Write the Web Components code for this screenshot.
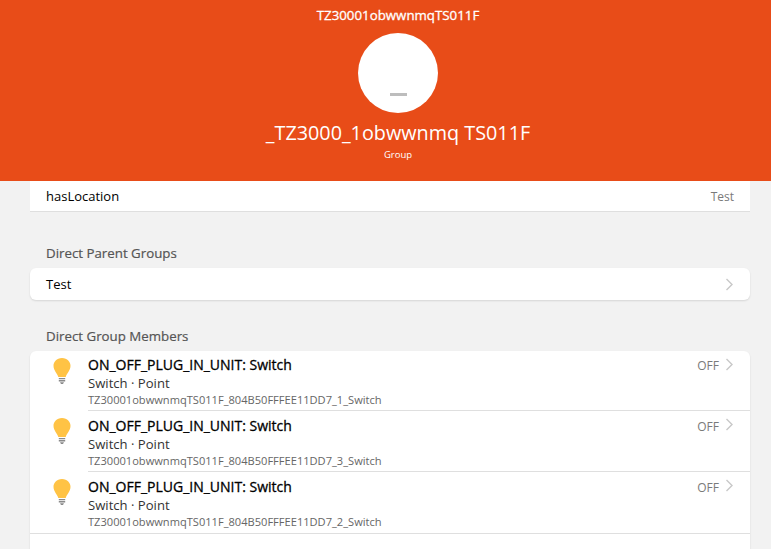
<!doctype html>
<html>
<head>
<meta charset="utf-8">
<title>Group</title>
<style>
    html, body { margin: 0; height: 549px; overflow: hidden; background: #f2f2f2; }
    body { font-family: "Open Sans", "Noto Sans", sans-serif; color: #000; }
    main { display: block; padding: 0 21px 0 30px; }
</style>
</head>
<body>
<group-hero title-text="TZ30001obwwnmqTS011F" name="_TZ3000_1obwwnmq TS011F" kind="Group" initial="_"></group-hero>
<main>
    <list-card flat>
        <info-row label="hasLocation" value="Test"></info-row>
    </list-card>
    <section-title style="--top: 31px">Direct Parent Groups</section-title>
    <list-card>
        <link-row label="Test"></link-row>
    </list-card>
    <section-title style="--top: 26px">Direct Group Members</section-title>
    <list-card open>
        <device-row name="ON_OFF_PLUG_IN_UNIT: Switch" type="Switch · Point" ident="TZ30001obwwnmqTS011F_804B50FFFEE11DD7_1_Switch" state="OFF"></device-row>
        <device-row name="ON_OFF_PLUG_IN_UNIT: Switch" type="Switch · Point" ident="TZ30001obwwnmqTS011F_804B50FFFEE11DD7_3_Switch" state="OFF"></device-row>
        <device-row last name="ON_OFF_PLUG_IN_UNIT: Switch" type="Switch · Point" ident="TZ30001obwwnmqTS011F_804B50FFFEE11DD7_2_Switch" state="OFF"></device-row>
        <div style="height: 40px"></div>
    </list-card>
</main>

<script>
(() => {
    const chevron = `<svg width="9" height="13" viewBox="0 0 9 13" fill="none" stroke="#c8c8c8" stroke-width="1.4"><path d="M1.5 1l5.5 5.5L1.5 12"/></svg>`
    const bulb = `<svg width="20" height="29" viewBox="0 0 20 29">
        <path fill="#ffc345" d="M10 1C4.6 1 1.5 5 1.5 8.8c0 4.6 3.6 7.4 4.8 11.2h7.4c1.2-3.8 4.8-6.6 4.8-11.2C18.500 5 15.400 1 10 1z"/>
        <path fill="#8a8a8a" d="M6.800 21h6.400v1.300H6.800zM6.800 23.100h6.400v1.300H6.800zM8 25.200h4L11 27H9z"/>
    </svg>`

    const define = (name, render) => {
        customElements.define(name, class extends HTMLElement {
            constructor() {
                super()
                this.attachShadow({mode: "open"})
            }
            connectedCallback() {
                this.shadowRoot.innerHTML = render(n => this.getAttribute(n) || '')
            }
        })
    }

    define('group-hero', a => `
        <style>
            :host { display: flex; flex-direction: column; align-items: center; height: 181px; padding-left: 25px; background: #e84c18; color: #fff; }
            .top { font-size: 13.3px; -webkit-text-stroke: .3px #fff; line-height: 18px; margin-top: 6px; }
            .avatar { width: 80px; height: 80px; margin-top: 9px; border-radius: 50%; background: #fff; display: flex; justify-content: center; }
            .avatar span { width: 17px; height: 3px; margin-top: 60px; background: #bdbdbd; }
            .name { font-size: 19.8px; line-height: 26px; margin-top: 7px; }
            .kind { font-size: 9.5px; line-height: 12px; margin-top: 3px; }
        </style>
        <div class="top">${a('title-text')}</div>
        <div class="avatar"><span></span></div>
        <div class="name">${a('name')}</div>
        <div class="kind">${a('kind')}</div>`)

    define('section-title', () => `
        <style>
            :host { display: block; padding: var(--top) 16px 5px; font-size: 13.3px; line-height: 20px; -webkit-text-stroke: .2px #555; color: #555; }
        </style>
        <slot></slot>`)

    customElements.define('list-card', class extends HTMLElement {
        constructor() {
            super()
            const root = this.attachShadow({mode: "open"})
            root.innerHTML = `
                <style>
                    :host { display: block; background: #fff; border-radius: 6px; box-shadow: 0 1px 2px rgba(0,0,0,.12); }
                    :host([flat]) { border-radius: 0; box-shadow: none; border-bottom: 1px solid #dfdfdf; }
                    :host([open]) { border-radius: 6px 6px 0 0; }
                </style>
                <slot></slot>`
        }
    })

    define('info-row', a => `
        <style>
            :host { display: flex; justify-content: space-between; align-items: center; height: 30px; padding: 0 16px; font-size: 13px; }
            .value { font-size: 12px; color: #7a7a7a; }
        </style>
        <span>${a('label')}</span><span class="value">${a('value')}</span>`)

    define('link-row', a => `
        <style>
            :host { display: flex; justify-content: space-between; align-items: center; height: 32px; padding: 0 16px; font-size: 13px; }
            svg { display: block; }
        </style>
        <span>${a('label')}</span>${chevron}`)

    define('device-row', a => `
        <style>
            :host { display: flex; height: 61px; --pad: 7px; }
            :host(:first-child) { height: 60px; --pad: 6px; }
            .icon { width: 58px; flex: none; padding: 6px 0 0 22px; box-sizing: border-box; }
            .icon svg { display: block; }
            .body { flex: 1; display: flex; border-bottom: 1px solid #dfdfdf; min-width: 0; padding-right: 16px; }
            :host([last]) .body { border-bottom: 0; }
            :host([last]) { border-bottom: 1px solid #dfdfdf; height: 61px; }
            .text { flex: 1; padding-top: var(--pad); }
            .name { font-size: 14px; -webkit-text-stroke: .3px #000; line-height: 16px; }
            .type { font-size: 13.1px; line-height: 18px; margin-top: 1px; color: #333; }
            .ident { font-size: 11.1px; line-height: 14px; margin-top: 1px; color: #666; }
            .state { font-size: 12px; color: #7a7a7a; line-height: 18px; padding-top: var(--pad); }
            .arrow { margin-left: 6px; padding-top: 7px; }
            .arrow svg { display: block; }
        </style>
        <div class="icon">${bulb}</div>
        <div class="body">
            <div class="text">
                <div class="name">${a('name')}</div>
                <div class="type">${a('type')}</div>
                <div class="ident">${a('ident')}</div>
            </div>
            <div class="state">${a('state')}</div>
            <div class="arrow">${chevron}</div>
        </div>`)
})()
</script>
</body>
</html>
